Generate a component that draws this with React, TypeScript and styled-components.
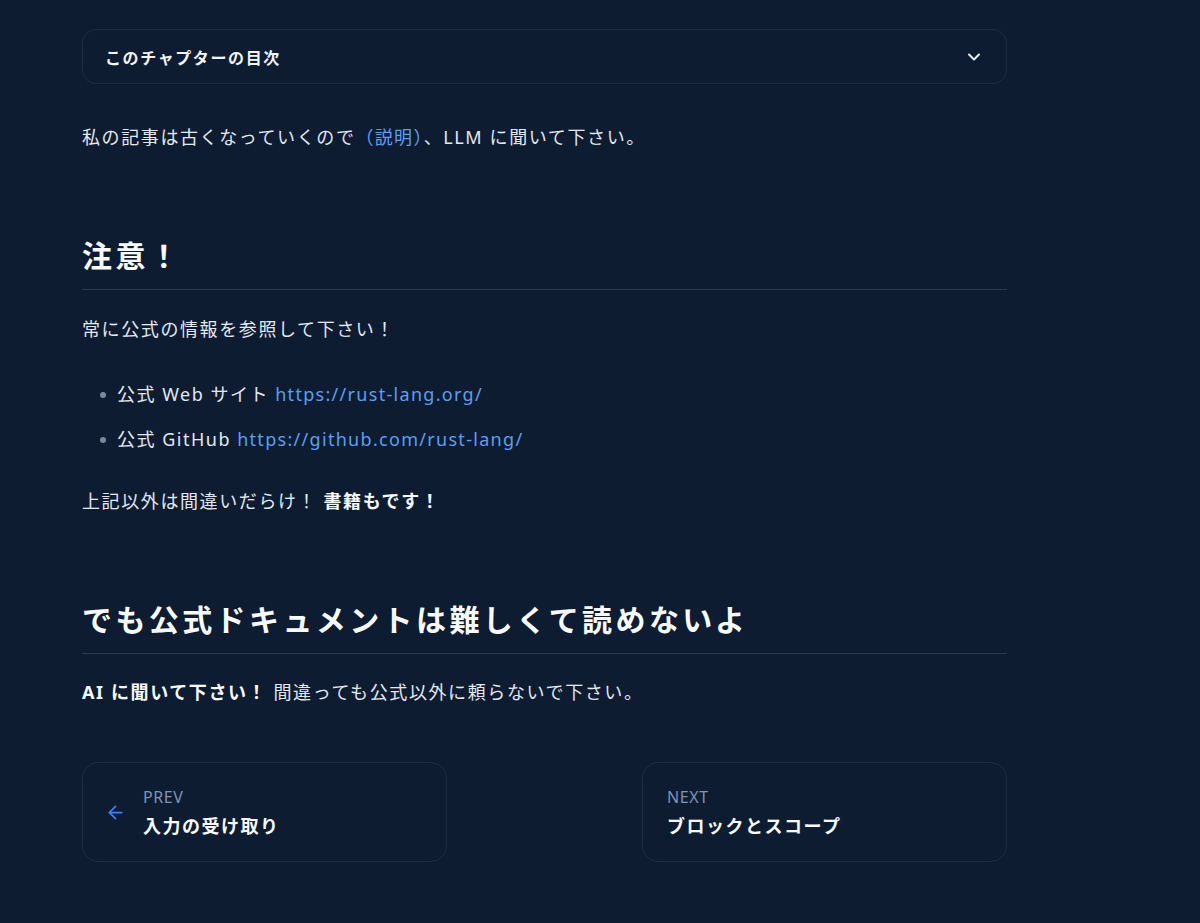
import * as React from "react";
import styled, { createGlobalStyle } from "styled-components";
import { ChevronDown, ArrowLeft } from "lucide-react";

const GlobalStyle = createGlobalStyle`
  html, body {
    margin: 0;
    padding: 0;
    background: #0e1c32;
  }
  body {
    font-family: "Noto Sans", "Noto Sans CJK JP", sans-serif;
    color: #e2e8f0;
  }
`;

const Page = styled.div`
  min-height: 923px;
  background: #0e1c32;
`;

const Article = styled.article`
  width: 925px;
  margin-left: 82px;
  padding-top: 29px;
  padding-bottom: 40px;
`;

const Toc = styled.div`
  box-sizing: border-box;
  height: 55px;
  border: 1px solid #1d2c44;
  border-radius: 14px;
  display: flex;
  align-items: center;
  justify-content: space-between;
  padding: 0 22px 0 22px;
`;

const TocTitle = styled.span`
  font-size: 16px;
  font-weight: 700;
  letter-spacing: 1.6px;
  color: #f1f5f9;
`;

const Paragraph = styled.p<{ $top: number }>`
  margin: ${(p) => p.$top}px 0 0;
  font-size: 18px;
  line-height: 32px;
  letter-spacing: 1.6px;
  color: #e2e8f0;
`;

const Link = styled.a`
  color: #5b9ff0;
  text-decoration: none;
  letter-spacing: 1.3px;
`;

const Strong = styled.strong`
  font-weight: 700;
  color: #f8fafc;
`;

const Heading = styled.h2`
  margin: 83px 0 0;
  padding-bottom: 13px;
  border-bottom: 1px solid #2b3a51;
  font-size: 30px;
  line-height: 40px;
  font-weight: 700;
  letter-spacing: 3.4px;
  color: #f8fafc;
`;

const List = styled.ul`
  margin: 33px 0 0;
  padding: 0 0 0 35px;
  list-style: none;
`;

const Item = styled.li`
  position: relative;
  font-size: 18px;
  line-height: 32px;
  letter-spacing: 1.5px;
  & + & {
    margin-top: 13px;
  }
  &::before {
    content: "";
    position: absolute;
    left: -17px;
    top: 14px;
    width: 6px;
    height: 6px;
    border-radius: 50%;
    background: #7d8899;
  }
`;

const Pager = styled.nav`
  margin-top: 54px;
  display: grid;
  grid-template-columns: 365px 365px;
  justify-content: space-between;
`;

const Card = styled.a<{ $withIcon?: boolean }>`
  box-sizing: border-box;
  height: 100px;
  border: 1px solid #1d2c44;
  border-radius: 16px;
  display: flex;
  align-items: center;
  gap: 17px;
  padding: 0 24px 0 ${(p) => (p.$withIcon ? 22 : 24)}px;
  color: inherit;
  text-decoration: none;
`;

const CardText = styled.div`
  display: flex;
  flex-direction: column;
  gap: 5px;
`;

const CardLabel = styled.span`
  font-size: 16px;
  line-height: 22px;
  letter-spacing: 0.6px;
  color: #7f93b8;
`;

const CardTitle = styled.span`
  font-size: 18px;
  line-height: 26px;
  font-weight: 700;
  letter-spacing: 1.5px;
  color: #f8fafc;
`;

export default function App() {
  return (
    <Page>
      <GlobalStyle />
      <Article>
        <Toc>
          <TocTitle>このチャプターの目次</TocTitle>
          <ChevronDown size={20} strokeWidth={2.5} color="#e2e8f0" />
        </Toc>
        <Paragraph $top={37}>
          私の記事は古くなっていくので<Link href="#">（説明）</Link>、LLM に聞いて下さい。
        </Paragraph>

        <Heading>注意！</Heading>
        <Paragraph $top={23}>常に公式の情報を参照して下さい！</Paragraph>
        <List>
          <Item>
            公式 Web サイト <Link href="#">https://rust-lang.org/</Link>
          </Item>
          <Item>
            公式 GitHub <Link href="#">https://github.com/rust-lang/</Link>
          </Item>
        </List>
        <Paragraph $top={30}>
          上記以外は間違いだらけ！ <Strong>書籍もです！</Strong>
        </Paragraph>

        <Heading>でも公式ドキュメントは難しくて読めないよ</Heading>
        <Paragraph $top={22}>
          <Strong>AI に聞いて下さい！</Strong> 間違っても公式以外に頼らないで下さい。
        </Paragraph>

        <Pager>
          <Card href="#" $withIcon>
            <ArrowLeft size={21} strokeWidth={2} color="#3b82f6" />
            <CardText>
              <CardLabel>PREV</CardLabel>
              <CardTitle>入力の受け取り</CardTitle>
            </CardText>
          </Card>
          <Card href="#">
            <CardText>
              <CardLabel>NEXT</CardLabel>
              <CardTitle>ブロックとスコープ</CardTitle>
            </CardText>
          </Card>
        </Pager>
      </Article>
    </Page>
  );
}
